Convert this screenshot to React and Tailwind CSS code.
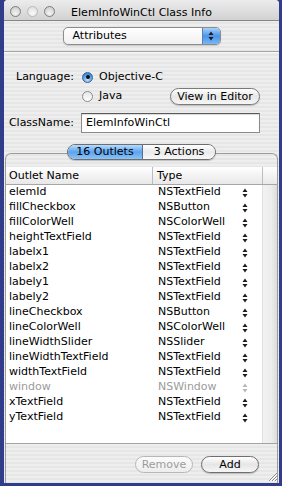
import React from 'react';

const outlets = [
  ['elemId', 'NSTextField'],
  ['fillCheckbox', 'NSButton'],
  ['fillColorWell', 'NSColorWell'],
  ['heightTextField', 'NSTextField'],
  ['labelx1', 'NSTextField'],
  ['labelx2', 'NSTextField'],
  ['labely1', 'NSTextField'],
  ['labely2', 'NSTextField'],
  ['lineCheckbox', 'NSButton'],
  ['lineColorWell', 'NSColorWell'],
  ['lineWidthSlider', 'NSSlider'],
  ['lineWidthTextField', 'NSTextField'],
  ['widthTextField', 'NSTextField'],
  ['window', 'NSWindow', true],
  ['xTextField', 'NSTextField'],
  ['yTextField', 'NSTextField'],
];

const Stepper = ({ dim }) => (
  <svg width="6" height="10" viewBox="0 0 6 10" className="block">
    <path d="M0.5 4 L3 0.5 L5.5 4 Z M0.5 6 L3 9.5 L5.5 6 Z" fill={dim ? '#b8b8b8' : '#1e1e1e'} />
  </svg>
);

const Light = ({ pale }) => (
  <div
    className={
      pale
        ? 'w-[11px] h-[11px] rounded-full border border-[#b9b9b9] bg-[radial-gradient(circle_at_50%_70%,#fafafa,#dadada)]'
        : 'w-[11px] h-[11px] rounded-full border border-[#7d7d7d] bg-[radial-gradient(circle_at_50%_70%,#f4f4f4,#c6c6c6)]'
    }
  />
);

const Radio = ({ on }) =>
  on ? (
    <div className="w-[11px] h-[11px] rounded-full border border-[#3d5f96] bg-[radial-gradient(circle_at_50%_75%,#bfe0ff,#3f8ae0_70%)] flex items-center justify-center">
      <div className="w-[4px] h-[4px] rounded-full bg-[#101010]" />
    </div>
  ) : (
    <div className="w-[11px] h-[11px] rounded-full border border-[#8a8a8a] bg-[linear-gradient(#e6e6e6,#ffffff)]" />
  );

export default function App() {
  return (
    <div className="w-[282px] h-[486px] bg-[#313d8b] overflow-hidden font-['DejaVu_Sans',sans-serif] text-[11px] text-black">
      <div className="relative ml-[4px] w-[275px] h-[483px] flex flex-col rounded-t-[4px] overflow-hidden bg-[repeating-linear-gradient(#eeeeee_0px,#eeeeee_2px,#e6e6e6_2px,#e6e6e6_4px)]">
        {/* title bar */}
        <div className="h-[21px] border-b border-[#858585] bg-[linear-gradient(#ececec,#d2d2d2)] flex items-center pt-[3px] relative">
          <div className="flex gap-[6px] pl-[6px]">
            <Light />
            <Light pale />
            <Light />
          </div>
          <div className="absolute inset-x-0 top-[4px] text-center leading-[17px]">ElemInfoWinCtl Class Info</div>
        </div>

        {/* popup */}
        <div className="mt-[6px] mx-auto w-[158px] h-[18px] rounded-[5px] border border-[#8c8c8c] bg-[linear-gradient(#ffffff,#f0f0f0)] flex overflow-hidden shadow-[0_1px_1px_rgba(0,0,0,0.15)]">
          <div className="flex-1 pl-[9px] leading-[16px]">Attributes</div>
          <div className="w-[18px] border-l border-[#5c7fb3] bg-[linear-gradient(#a9d1fb,#4b95e8_50%,#7ab6f3)] flex items-center justify-center">
            <Stepper />
          </div>
        </div>

        <div className="mt-[6px] h-[2px] border-t border-[#a4a4a4] bg-[#f8f8f8]" />

        {/* language */}
        <div className="mt-[16px] h-[16px] flex items-center">
          <div className="w-[70px] text-right">Language:</div>
          <div className="ml-[8px]"><Radio on /></div>
          <div className="ml-[6px]">Objective-C</div>
        </div>
        <div className="mt-[3px] h-[17px] flex items-center">
          <div className="w-[70px]" />
          <div className="ml-[8px]"><Radio /></div>
          <div className="ml-[6px]">Java</div>
          <button className="ml-auto mr-[19px] w-[90px] h-[17px] rounded-full border border-[#7a7a7a] bg-[linear-gradient(#ffffff,#e8e8e8_50%,#f6f6f6)] leading-[15px] shadow-[0_1px_1px_rgba(0,0,0,0.2)]">
            View in Editor
          </button>
        </div>

        {/* class name */}
        <div className="mt-[8px] h-[20px] flex items-center">
          <div className="w-[70px] text-right">ClassName:</div>
          <div className="ml-[7px] mr-[19px] flex-1 h-[20px] border border-[#8a8a8a] border-t-[#595959] bg-white pl-[4px] leading-[18px] shadow-[inset_0_1px_1px_rgba(0,0,0,0.15)]">
            ElemInfoWinCtl
          </div>
        </div>

        {/* tabs */}
        <div className="mt-[11px] relative z-10 flex justify-center">
          <div className="flex h-[16px] rounded-[8px] border border-[#6e6e6e] overflow-hidden shadow-[0_1px_1px_rgba(0,0,0,0.2)]">
            <div className="w-[75px] text-center leading-[14px] bg-[linear-gradient(#b6dcff,#5ba3ee_50%,#8cc4f6)] border-r border-[#5a6e8c]">16 Outlets</div>
            <div className="w-[72px] text-center leading-[14px] bg-[linear-gradient(#ffffff,#eaeaea_50%,#f7f7f7)]">3 Actions</div>
          </div>
        </div>

        {/* tab box + table */}
        <div className="-mt-[7px] mx-[1px] flex-1 flex flex-col border-t border-x border-[#9c9c9c] rounded-t-[6px] pt-[13px]">
          <div className="flex flex-col h-[277px] bg-white border-b border-[#a3a3a3]">
            <div className="flex h-[18px] border-b border-[#a6a6a6] bg-[linear-gradient(#ffffff,#f1f1f1_60%,#e8e8e8)]">
              <div className="w-[147px] pl-[3px] leading-[17px] border-r border-[#bdbdbd]">Outlet Name</div>
              <div className="w-[110px] pl-[4px] leading-[17px] border-r border-[#bdbdbd]">Type</div>
              <div className="flex-1" />
            </div>
            <div className="flex flex-1">
              <div className="flex-1 flex flex-col">
                {outlets.map(([name, type, dim]) => (
                  <div key={name} className={dim ? 'flex h-[15px] items-center text-[#9b9b9b]' : 'flex h-[15px] items-center'}>
                    <div className="w-[147px] pl-[3px]">{name}</div>
                    <div className="w-[89px] pl-[5px]">{type}</div>
                    <Stepper dim={dim} />
                  </div>
                ))}
              </div>
              <div className="w-[15px] bg-[linear-gradient(90deg,#f2f2f2,#ececec_60%,#dcdcdc)] border-l border-[#e0e0e0]" />
            </div>
          </div>

          {/* buttons */}
          <div className="mt-[12px] flex justify-end gap-[8px] pr-[18px]">
            <button className="w-[58px] h-[17px] rounded-full border border-[#b7b7b7] text-[#9c9c9c] bg-[linear-gradient(#fbfbfb,#ededed)] leading-[15px]">
              Remove
            </button>
            <button className="w-[58px] h-[17px] rounded-full border border-[#6f6f6f] bg-[linear-gradient(#ffffff,#e6e6e6_50%,#f6f6f6)] leading-[15px] shadow-[0_1px_1px_rgba(0,0,0,0.2)]">
              Add
            </button>
          </div>
        </div>

        <svg width="11" height="11" viewBox="0 0 11 11" className="absolute right-[1px] bottom-[1px]">
          <path d="M10 2 L2 10 M10 5 L5 10 M10 8 L8 10" stroke="#8a8a8a" strokeWidth="1" />
          <path d="M10 3 L3 10 M10 6 L6 10 M10 9 L9 10" stroke="#ffffff" strokeWidth="1" />
        </svg>
      </div>
    </div>
  );
}
